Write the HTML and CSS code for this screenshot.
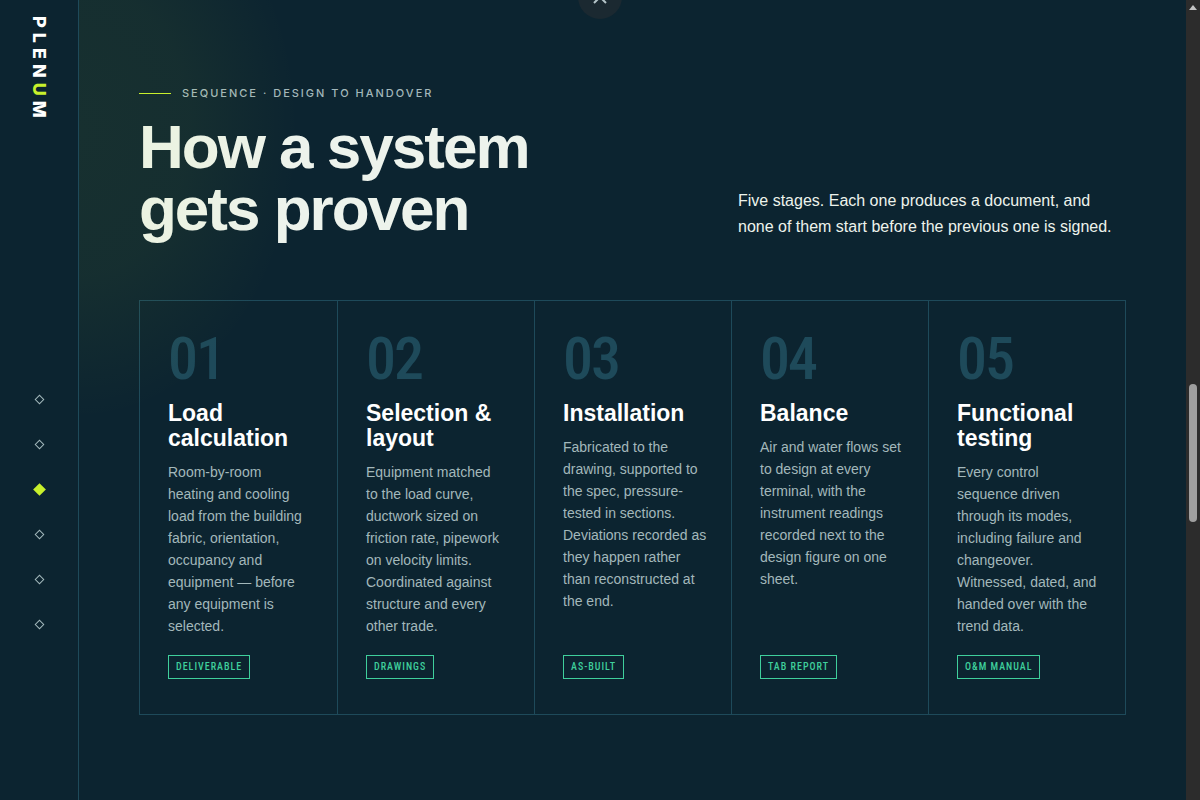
FILE: index.html
```html
<!DOCTYPE html>
<html lang="en">
  <head>
    <meta charset="UTF-8" />
    <meta name="viewport" content="width=device-width, initial-scale=1.0" />
    <title>Plenum</title>
    <link rel="stylesheet" href="styles.css">
  </head>
  <body>
    <aside class="rail">
      <a class="brand" href="#top">PLEN<span>U</span>M</a>
      <nav class="dots" aria-label="Sections">
        <a href="#intro" aria-label="Intro"><i></i></a>
        <a href="#services" aria-label="Services"><i></i></a>
        <a class="active" href="#sequence" aria-label="Sequence"><i></i></a>
        <a href="#projects" aria-label="Projects"><i></i></a>
        <a href="#people" aria-label="People"><i></i></a>
        <a href="#contact" aria-label="Contact"><i></i></a>
      </nav>
    </aside>

    <main class="section" id="sequence">
      <header class="head">
        <div>
          <p class="eyebrow">Sequence · Design to handover</p>
          <h2>How a system<br>gets proven</h2>
        </div>
        <p class="lead">Five stages. Each one produces a document, and none of them start before the previous one is signed.</p>
      </header>

      <ol class="stages">
        <li class="stage">
          <span class="num">01</span>
          <h3>Load calculation</h3>
          <p>Room-by-room heating&nbsp;and cooling load&nbsp;from the building fabric, orientation, occupancy&nbsp;and equipment&nbsp;— before any equipment&nbsp;is selected.</p>
          <span class="tag">Deliverable</span>
        </li>
        <li class="stage">
          <span class="num">02</span>
          <h3>Selection &amp; layout</h3>
          <p>Equipment matched to&nbsp;the load curve, ductwork sized on friction rate, pipework on velocity limits. Coordinated against structure and every other trade.</p>
          <span class="tag">Drawings</span>
        </li>
        <li class="stage">
          <span class="num">03</span>
          <h3>Installation</h3>
          <p>Fabricated to the drawing, supported to the spec, pressure-tested in sections. Deviations recorded as they happen rather than reconstructed at the end.</p>
          <span class="tag">As-built</span>
        </li>
        <li class="stage">
          <span class="num">04</span>
          <h3>Balance</h3>
          <p>Air and water flows set to design at every terminal, with the instrument readings recorded next to the design figure on one sheet.</p>
          <span class="tag">TAB report</span>
        </li>
        <li class="stage">
          <span class="num">05</span>
          <h3>Functional testing</h3>
          <p>Every control sequence driven through its modes, including failure and changeover. Witnessed, dated, and handed over with the trend data.</p>
          <span class="tag">O&amp;M manual</span>
        </li>
      </ol>
    </main>

    <div class="scrollbar" aria-hidden="true">
      <svg width="10" height="6" viewBox="0 0 10 6"><path d="M5 0 L9 5 H1 Z" fill="#c4c4c4"/></svg>
      <div class="thumb"></div>
    </div>

    <button class="to-top" aria-label="Back to top">
      <svg width="16" height="10" viewBox="0 0 16 10"><path d="M2 8 L8 2 L14 8" fill="none" stroke="#b4c4c8" stroke-width="2"/></svg>
    </button>
  </body>
</html>
```

FILE: styles.css
```css
* {
  box-sizing: border-box;
  margin: 0;
  padding: 0;
}

body {
  display: grid;
  grid-template-columns: 79px minmax(0, 1fr) 14px;
  min-height: 100vh;
  background: #0c2430;
  color: #edf3ec;
  font-family: "Liberation Sans", Arial, sans-serif;
}

/* left rail */
.rail {
  display: flex;
  flex-direction: column;
  align-items: center;
  height: 100vh;
  padding-top: 16px;
  border-right: 1px solid #1e4a5a;
}

.brand {
  writing-mode: vertical-rl;
  height: 108px;
  color: #fff;
  font-family: Inter, sans-serif;
  font-size: 18px;
  font-weight: 800;
  line-height: 24px;
  letter-spacing: 5px;
  text-decoration: none;
}

.brand span {
  color: #c8f02c;
}

.dots {
  margin-top: 253px;
}

.dots a {
  display: grid;
  place-items: center;
  width: 44px;
  height: 45px;
}

.dots i {
  width: 7px;
  height: 7px;
  border: 1px solid #a3b8bb;
  transform: rotate(45deg);
}

.dots .active i {
  width: 9px;
  height: 9px;
  border: none;
  background: #c8f02c;
}

/* content */
.section {
  position: relative;
  padding: 86px 60px;
}

.section::before {
  content: "";
  position: absolute;
  inset: 0;
  background: radial-gradient(ellipse 220px 290px at 0 130px, rgba(200, 240, 44, 0.06) 0%, rgba(200, 240, 44, 0.05) 50%, transparent 100%);
  pointer-events: none;
}

.head {
  display: flex;
  justify-content: space-between;
  align-items: flex-end;
  gap: 40px;
  margin-bottom: 60px;
}

.eyebrow {
  display: flex;
  align-items: center;
  gap: 11px;
  margin-bottom: 16px;
  color: #a3b8bb;
  font-family: Inter, sans-serif;
  font-size: 11px;
  font-weight: 500;
  line-height: 14px;
  letter-spacing: 2px;
  text-transform: uppercase;
}

.eyebrow::before {
  content: "";
  width: 32px;
  height: 1px;
  background: #c8f02c;
}

h2 {
  font-size: 62px;
  line-height: 62px;
  letter-spacing: -2px;
}

.lead {
  width: 388px;
  font-size: 16px;
  line-height: 26px;
}

.stages {
  display: grid;
  grid-template-columns: repeat(5, 1fr);
  border: 1px solid #1e4a5a;
  list-style: none;
}

.stage {
  display: flex;
  flex-direction: column;
  align-items: flex-start;
  padding: 28px 22px 35px 28px;
}

.stage + .stage {
  border-left: 1px solid #1e4a5a;
}

.num {
  margin-bottom: 12px;
  color: #1e4a5a;
  font-family: "Roboto Condensed", "Liberation Sans Narrow", sans-serif;
  font-size: 60px;
  font-weight: 500;
  line-height: 60px;
  letter-spacing: -2px;
}

h3 {
  margin-bottom: 10px;
  color: #fff;
  font-size: 23px;
  line-height: 25px;
}

.stage p {
  margin-bottom: 18px;
  color: #a3b8bb;
  font-size: 14px;
  line-height: 22px;
}

.tag {
  margin-top: auto;
  padding: 4px 7px;
  border: 1px solid #3fcf9c;
  color: #3fcf9c;
  font-family: "Roboto Condensed", "Liberation Sans Narrow", sans-serif;
  font-size: 10px;
  font-weight: 500;
  line-height: 14px;
  letter-spacing: 1px;
  text-transform: uppercase;
  white-space: nowrap;
}

/* page scrollbar */
.scrollbar {
  display: flex;
  flex-direction: column;
  align-items: center;
  padding-top: 5px;
  background: #2c2c2c;
}

.thumb {
  width: 8px;
  height: 138px;
  margin-top: 373px;
  border-radius: 4px;
  background: #9f9f9f;
}

.to-top {
  position: fixed;
  top: -25px;
  left: 50%;
  display: grid;
  place-items: center;
  width: 44px;
  height: 44px;
  margin-left: -22px;
  padding-top: 6px;
  border: none;
  border-radius: 50%;
  background: #1b2931;
}
```
